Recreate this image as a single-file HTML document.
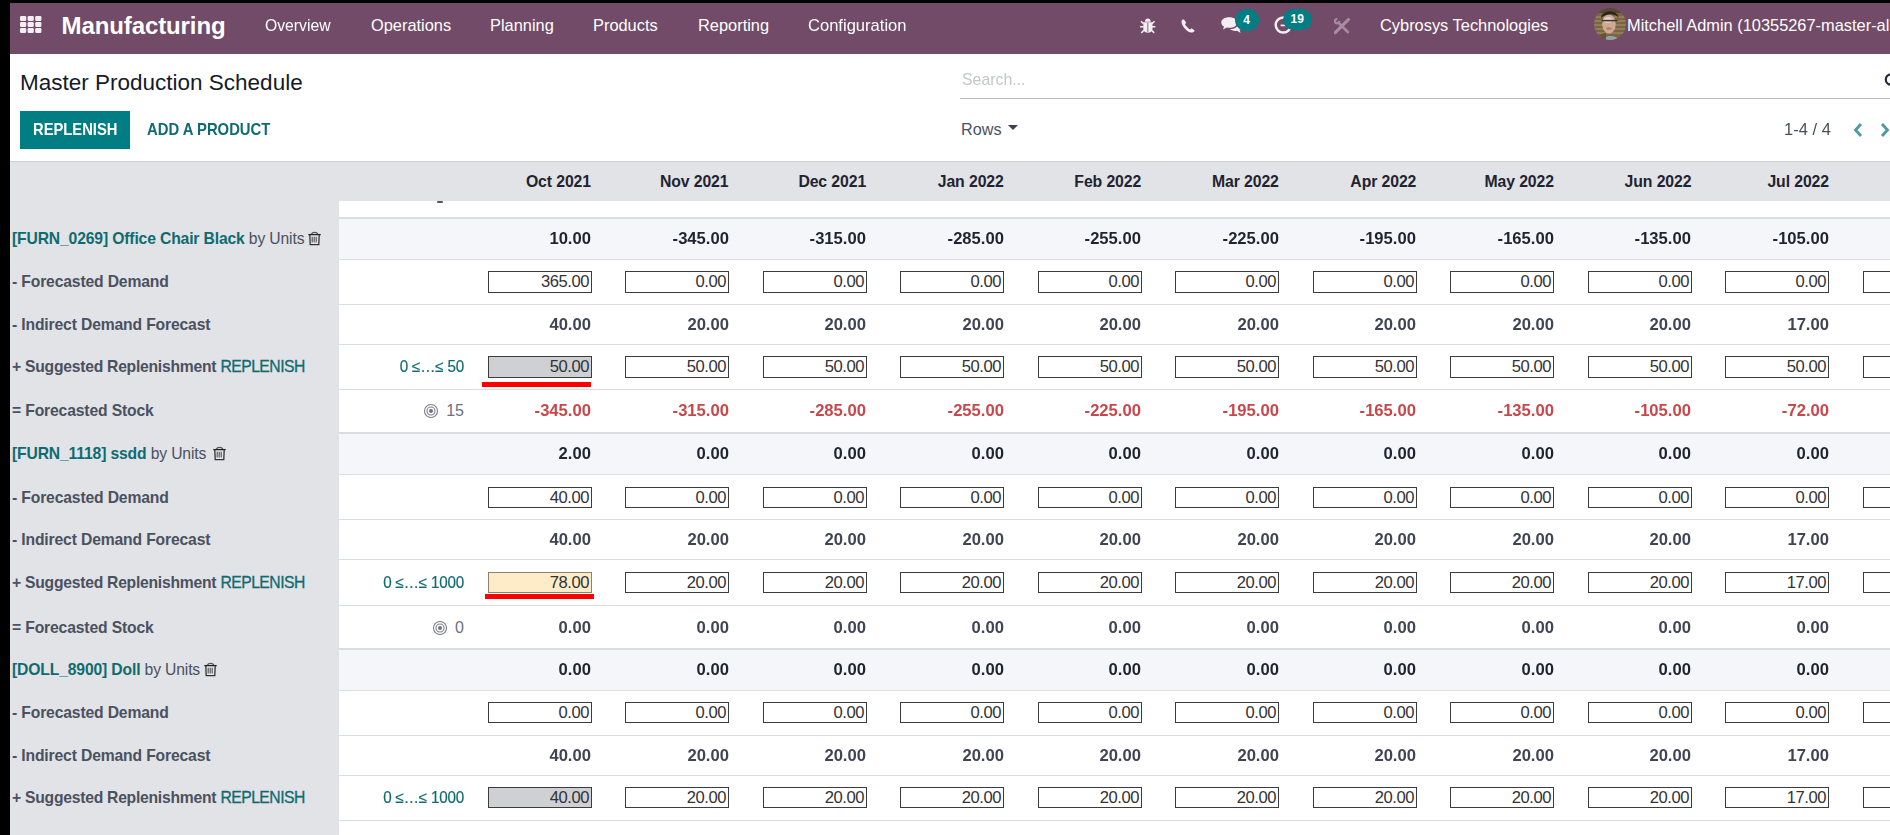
<!DOCTYPE html><html><head><meta charset="utf-8"><style>
*{margin:0;padding:0;box-sizing:border-box}
html,body{width:1890px;height:835px;overflow:hidden;background:#000;font-family:"Liberation Sans",sans-serif}
.a{position:absolute;white-space:nowrap}
#nav{position:absolute;left:10px;top:3px;width:1880px;height:52px;background:#714b67;border-bottom:1px solid #5e3f56}
.mi{position:absolute;top:11px;color:#fff;font-size:16.4px;line-height:22px;white-space:nowrap}
.r{position:absolute;text-align:right;white-space:nowrap}
.lbl{position:absolute;left:12px;font-weight:bold;color:#4a5160;font-size:15.7px;letter-spacing:-0.15px;white-space:nowrap;line-height:22px}
.val{font-weight:bold;color:#3f4553;font-size:15.7px;line-height:22px;transform:scaleX(1.06);transform-origin:100% 50%}
.inp{position:absolute;width:104px;height:22px;border:1px solid #3c3c3c;background:#fff;font-size:16.6px;color:#333;text-align:right;padding-right:2px;line-height:19px;white-space:nowrap;letter-spacing:-0.45px}
.hline{position:absolute;left:339px;width:1551px;height:1px;background:#dcdde1}
.sq{transform-origin:0 50%;}
</style></head><body><div id="nav">
<svg class="a" style="left:9.8px;top:12.8px" width="22" height="18" viewBox="0 0 22 18"><rect x="0.0" y="0.0" width="6.2" height="5" rx="1.2" fill="#f3eef1"/><rect x="7.6" y="0.0" width="6.2" height="5" rx="1.2" fill="#f3eef1"/><rect x="15.2" y="0.0" width="6.2" height="5" rx="1.2" fill="#f3eef1"/><rect x="0.0" y="6.0" width="6.2" height="5" rx="1.2" fill="#f3eef1"/><rect x="7.6" y="6.0" width="6.2" height="5" rx="1.2" fill="#f3eef1"/><rect x="15.2" y="6.0" width="6.2" height="5" rx="1.2" fill="#f3eef1"/><rect x="0.0" y="12.0" width="6.2" height="5" rx="1.2" fill="#f3eef1"/><rect x="7.6" y="12.0" width="6.2" height="5" rx="1.2" fill="#f3eef1"/><rect x="15.2" y="12.0" width="6.2" height="5" rx="1.2" fill="#f3eef1"/></svg>
<div class="a" style="left:51.5px;top:-2.7px;line-height:51px;color:#fff;font-size:24px;font-weight:bold;letter-spacing:-0.1px">Manufacturing</div>
<div class="mi" style="left:255px;top:11px;transform:scaleX(0.96);transform-origin:0 0">Overview</div>
<div class="mi" style="left:361px;top:11px;transform:scaleX(1);transform-origin:0 0">Operations</div>
<div class="mi" style="left:480px;top:11px;transform:scaleX(1);transform-origin:0 0">Planning</div>
<div class="mi" style="left:583px;top:11px;transform:scaleX(1);transform-origin:0 0">Products</div>
<div class="mi" style="left:688px;top:11px;transform:scaleX(1);transform-origin:0 0">Reporting</div>
<div class="mi" style="left:798px;top:11px;transform:scaleX(1.01);transform-origin:0 0">Configuration</div>
<svg class="a" style="left:1130px;top:15px" width="16" height="16" viewBox="0 0 16 16">
<path d="M4.9 3.7 C4.9 -0.6 10.7 -0.6 10.7 3.7 Z" fill="#f4eef2"/>
<path d="M3.3 4.3 L12.5 4.3 L12.5 10.8 C12.5 13.6 10.5 14.8 7.9 14.8 C5.3 14.8 3.3 13.6 3.3 10.8 Z" fill="#f4eef2"/>
<path d="M0.9 3.2 L3.6 5.6 M14.6 3.2 L11.9 5.6 M0.1 8.8 L3.5 8.8 M15.4 8.8 L12 8.8 M1.3 14.9 L3.9 12.3 M14.2 14.9 L11.6 12.3" stroke="#f4eef2" stroke-width="1.5"/>
<rect x="7.3" y="4.8" width="1" height="9.6" fill="#8c6f72"/>
</svg>
<svg class="a" style="left:1171px;top:15.8px" width="14" height="14" viewBox="0 0 14 14">
<path d="M1.6 0.6 C0.2 1.6 0 3.6 1.6 6.4 C3.4 9.6 6.2 12.4 9.4 13.4 C11.2 13.9 12.6 13.4 13.5 12.1 L13.6 11.6 L10.6 9.2 L9.2 10.4 C7.6 9.8 4.8 7 4 5.2 L5.2 3.8 L3 0.5 Z" fill="#f4eef2"/>
</svg>
<svg class="a" style="left:1210.5px;top:14px" width="22" height="18" viewBox="0 0 22 18">
<path d="M8.2 0.2 C3.6 0.2 0.3 2.4 0.3 5.4 C0.3 7.2 1.5 8.8 3.2 9.7 L1.8 12.6 L6 10.6 C6.8 10.7 7.5 10.8 8.2 10.8 C12.8 10.8 16.1 8.6 16.1 5.4 C16.1 2.4 12.8 0.2 8.2 0.2 Z" fill="#f4eef2"/>
<path d="M17.3 6.2 C17.3 9.8 13.6 12 8.9 12.1 C10.1 13.2 12 13.9 14.2 13.9 C14.8 13.9 15.4 13.8 16 13.7 L19.6 15.9 L18.6 13 C20.2 12.2 21.2 10.9 21.2 9.3 C21.2 8 20.3 6.8 18.9 6 Z" fill="#f4eef2"/>
</svg>
<div class="a" style="left:1224.6px;top:5.7px;width:24px;height:22px;border-radius:11px;background:#017e84;color:#fff;font-weight:bold;font-size:12px;line-height:22px;text-align:center">4</div>
<svg class="a" style="left:1263.5px;top:13px" width="20" height="20" viewBox="0 0 20 20">
<circle cx="9.3" cy="9" r="7.6" fill="none" stroke="#f4eef2" stroke-width="2.5"/>
<path d="M6.6 9.4 L12 9.4" stroke="#f4eef2" stroke-width="1.7" fill="none"/>
</svg>
<div class="a" style="left:1272.7px;top:6px;width:29px;height:20.5px;border-radius:10.5px;background:#017e84;color:#fff;font-weight:bold;font-size:12px;line-height:20px;text-align:center">19</div>
<svg class="a" style="left:1323.5px;top:14.8px" width="17" height="17" viewBox="0 0 17 17">
<path d="M5.6 5.8 L13.8 14" stroke="#a88ca2" stroke-width="2.6" stroke-linecap="round"/>
<path d="M5.07 2.94 A2.1 2.1 0 1 1 3.36 1.23" fill="none" stroke="#a88ca2" stroke-width="2.3"/>
<path d="M1.2 14.6 L14.4 1.6" stroke="#a88ca2" stroke-width="3.1" stroke-linecap="round"/>
</svg>
<div class="mi" style="left:1370px;top:11px;transform:scaleX(1.0);transform-origin:0 0">Cybrosys Technologies</div>
<svg class="a" style="left:1584px;top:4.6px" width="32" height="32" viewBox="0 0 32 32">
<defs><clipPath id="cc"><circle cx="16" cy="16" r="16"/></clipPath><filter id="bl" x="-10%" y="-10%" width="120%" height="120%"><feGaussianBlur stdDeviation="0.7"/></filter></defs>
<g clip-path="url(#cc)"><g filter="url(#bl)">
<rect width="32" height="32" fill="#7a6644"/>
<path d="M0 9 H32 M0 13 H32 M0 17 H32 M0 21 H32 M0 25 H32" stroke="#a99366" stroke-width="1.2"/>
<rect x="0" y="0" width="32" height="5" fill="#5a4630"/>
<ellipse cx="15" cy="16" rx="6.8" ry="9.5" fill="#cfa992"/><ellipse cx="14" cy="12" rx="5" ry="3" fill="#e3cfc4"/>
<path d="M7 10 C7 2 24 1 24.5 10 L23 8 C19 5.5 12 5.5 8.5 9 Z" fill="#2a221e"/>
<path d="M7.5 12.6 H23.5" stroke="#3a3234" stroke-width="1.5"/>
<ellipse cx="15" cy="20.5" rx="3" ry="1.3" fill="#b07e6e"/>
<path d="M8 34 C9 26 24 26 26 34 Z" fill="#93a2a8"/>
<path d="M2 34 C4 26 9 25 12 25 L12 34 Z" fill="#6a5236"/>
</g></g></svg>
<div class="mi" style="left:1617px;top:11px;transform:scaleX(1.0);transform-origin:0 0">Mitchell Admin (10355267-master-all)</div>
</div>
<div class="a" style="left:10px;top:54px;width:1880px;height:108px;background:#fff"></div>
<div class="a" style="left:20px;top:68px;font-size:22.5px;color:#141a29;line-height:30px">Master Production Schedule</div>
<div class="a" style="left:962px;top:68px;font-size:16.2px;color:#c4c6ca;line-height:22px;transform:scaleX(0.98);transform-origin:0 0">Search...</div>
<div class="a" style="left:960px;top:98px;width:930px;height:1px;background:#b8bbc0"></div>
<svg class="a" style="left:1878px;top:71px" width="16" height="18" viewBox="0 0 16 18"><circle cx="13" cy="8.5" r="5.2" fill="none" stroke="#222b3a" stroke-width="2.2"/></svg>
<div class="a" style="left:20px;top:111px;width:110px;height:38px;background:#017e84"></div>
<div class="a" style="left:33px;top:118px;line-height:22px;color:#fff;font-weight:bold;font-size:16.4px;transform:scaleX(0.9);transform-origin:0 0">REPLENISH</div>
<div class="a" style="left:147px;top:118px;line-height:22px;color:#0f6b70;font-weight:bold;font-size:16.4px;transform:scaleX(0.905);transform-origin:0 0">ADD A PRODUCT</div>
<div class="a" style="left:961px;top:118px;line-height:22px;color:#4a5263;font-size:16.2px">Rows</div>
<svg class="a" style="left:1008px;top:125px" width="10" height="5" viewBox="0 0 10 5"><path d="M0 0 L10 0 L5 5 Z" fill="#3a404d"/></svg>
<div class="a" style="left:1784px;top:118px;line-height:22px;color:#4a4f5a;font-size:16.2px;transform:scaleX(1.02);transform-origin:0 0">1-4 / 4</div>
<svg class="a" style="left:1852px;top:122px" width="40" height="16" viewBox="0 0 40 16"><path d="M9 2 L3.5 8 L9 14" fill="none" stroke="#4f9a9c" stroke-width="2.8"/><path d="M30 2 L35.5 8 L30 14" fill="none" stroke="#4f9a9c" stroke-width="2.8"/></svg>
<div class="a" style="left:10px;top:161px;width:1880px;height:1px;background:#cfd1d5"></div>
<div class="a" style="left:10px;top:162px;width:1880px;height:39px;background:#e2e3e7"></div>
<div class="a" style="left:10px;top:201px;width:329px;height:634px;background:#e2e3e7"></div>
<div class="a" style="left:339px;top:201px;width:1551px;height:634px;background:#fff"></div>
<div class="a" style="left:437px;top:200.5px;width:6px;height:2px;border-radius:1px;background:#555"></div>
<div class="r" style="left:471.0px;width:120px;top:171px;line-height:22px;font-weight:bold;font-size:15.8px;color:#1f2430;letter-spacing:-0.1px">Oct 2021</div>
<div class="r" style="left:608.5px;width:120px;top:171px;line-height:22px;font-weight:bold;font-size:15.8px;color:#1f2430;letter-spacing:-0.1px">Nov 2021</div>
<div class="r" style="left:746.1px;width:120px;top:171px;line-height:22px;font-weight:bold;font-size:15.8px;color:#1f2430;letter-spacing:-0.1px">Dec 2021</div>
<div class="r" style="left:883.7px;width:120px;top:171px;line-height:22px;font-weight:bold;font-size:15.8px;color:#1f2430;letter-spacing:-0.1px">Jan 2022</div>
<div class="r" style="left:1021.2px;width:120px;top:171px;line-height:22px;font-weight:bold;font-size:15.8px;color:#1f2430;letter-spacing:-0.1px">Feb 2022</div>
<div class="r" style="left:1158.8px;width:120px;top:171px;line-height:22px;font-weight:bold;font-size:15.8px;color:#1f2430;letter-spacing:-0.1px">Mar 2022</div>
<div class="r" style="left:1296.3px;width:120px;top:171px;line-height:22px;font-weight:bold;font-size:15.8px;color:#1f2430;letter-spacing:-0.1px">Apr 2022</div>
<div class="r" style="left:1433.9px;width:120px;top:171px;line-height:22px;font-weight:bold;font-size:15.8px;color:#1f2430;letter-spacing:-0.1px">May 2022</div>
<div class="r" style="left:1571.4px;width:120px;top:171px;line-height:22px;font-weight:bold;font-size:15.8px;color:#1f2430;letter-spacing:-0.1px">Jun 2022</div>
<div class="r" style="left:1709.0px;width:120px;top:171px;line-height:22px;font-weight:bold;font-size:15.8px;color:#1f2430;letter-spacing:-0.1px">Jul 2022</div>
<div class="a" style="left:339px;top:217px;width:1551px;height:2px;background:#dcdde1"></div>
<div class="a" style="left:339px;top:219px;width:1551px;height:40px;background:#f5f6f9"></div>
<div class="hline" style="top:259px"></div>
<div class="hline" style="top:304px"></div>
<div class="hline" style="top:344px"></div>
<div class="hline" style="top:389px"></div>
<div class="a" style="left:339px;top:432px;width:1551px;height:2px;background:#dcdde1"></div>
<div class="lbl" style="top:228px;color:#0f6b70">[FURN_0269] Office Chair Black <span style="color:#4a5160;font-weight:normal">by Units</span></div>
<svg width="13" height="15" viewBox="0 0 13 15" style="position:absolute;left:308px;top:231px"><path d="M3.6 3.4 C3.6 0.6 9.6 0.6 9.6 3.4" fill="none" stroke="#555" stroke-width="1.3"/><path d="M0.3 3.6 L12.7 3.6" stroke="#222" stroke-width="1.3"/><path d="M1.8 3.8 L2.2 13.6 L10.8 13.6 L11.2 3.8" fill="none" stroke="#333" stroke-width="1.3"/><path d="M4.2 5.8 L4.2 11.4 M6.2 5.8 L6.2 11.4 M8.2 5.8 L8.2 11.4" stroke="#444" stroke-width="1"/></svg>
<div class="r val" style="left:471.0px;width:120px;top:228px;color:#1f2430">10.00</div>
<div class="r val" style="left:608.5px;width:120px;top:228px;color:#1f2430">-345.00</div>
<div class="r val" style="left:746.1px;width:120px;top:228px;color:#1f2430">-315.00</div>
<div class="r val" style="left:883.7px;width:120px;top:228px;color:#1f2430">-285.00</div>
<div class="r val" style="left:1021.2px;width:120px;top:228px;color:#1f2430">-255.00</div>
<div class="r val" style="left:1158.8px;width:120px;top:228px;color:#1f2430">-225.00</div>
<div class="r val" style="left:1296.3px;width:120px;top:228px;color:#1f2430">-195.00</div>
<div class="r val" style="left:1433.9px;width:120px;top:228px;color:#1f2430">-165.00</div>
<div class="r val" style="left:1571.4px;width:120px;top:228px;color:#1f2430">-135.00</div>
<div class="r val" style="left:1709.0px;width:120px;top:228px;color:#1f2430">-105.00</div>
<div class="lbl" style="top:271.4px">- Forecasted Demand</div>
<div class="inp" style="left:488px;top:271px;height:22px;line-height:19px">365.00</div>
<div class="inp" style="left:625px;top:271px;height:22px;line-height:19px">0.00</div>
<div class="inp" style="left:763px;top:271px;height:22px;line-height:19px">0.00</div>
<div class="inp" style="left:900px;top:271px;height:22px;line-height:19px">0.00</div>
<div class="inp" style="left:1038px;top:271px;height:22px;line-height:19px">0.00</div>
<div class="inp" style="left:1175px;top:271px;height:22px;line-height:19px">0.00</div>
<div class="inp" style="left:1313px;top:271px;height:22px;line-height:19px">0.00</div>
<div class="inp" style="left:1450px;top:271px;height:22px;line-height:19px">0.00</div>
<div class="inp" style="left:1588px;top:271px;height:22px;line-height:19px">0.00</div>
<div class="inp" style="left:1725px;top:271px;height:22px;line-height:19px">0.00</div>
<div class="inp" style="left:1863px;top:271px;height:22px;line-height:19px"></div>
<div class="lbl" style="top:313.6px">- Indirect Demand Forecast</div>
<div class="r val" style="left:471.0px;width:120px;top:313.6px">40.00</div>
<div class="r val" style="left:608.5px;width:120px;top:313.6px">20.00</div>
<div class="r val" style="left:746.1px;width:120px;top:313.6px">20.00</div>
<div class="r val" style="left:883.7px;width:120px;top:313.6px">20.00</div>
<div class="r val" style="left:1021.2px;width:120px;top:313.6px">20.00</div>
<div class="r val" style="left:1158.8px;width:120px;top:313.6px">20.00</div>
<div class="r val" style="left:1296.3px;width:120px;top:313.6px">20.00</div>
<div class="r val" style="left:1433.9px;width:120px;top:313.6px">20.00</div>
<div class="r val" style="left:1571.4px;width:120px;top:313.6px">20.00</div>
<div class="r val" style="left:1709.0px;width:120px;top:313.6px">17.00</div>
<div class="lbl" style="top:355.5px;letter-spacing:-0.25px">+ Suggested Replenishment <span style="color:#0f6b70;font-weight:normal;letter-spacing:-0.5px;-webkit-text-stroke:0.3px #0f6b70">REPLENISH</span></div>
<div class="r" style="left:344px;width:120px;top:355.5px;line-height:22px;color:#0f6b70;font-size:16px;letter-spacing:-0.2px;transform:scaleX(0.95);transform-origin:100% 50%;-webkit-text-stroke:0.2px #0f6b70">0 ≤…≤ 50</div>
<div class="inp" style="left:488px;top:356px;height:22px;line-height:19px;background:#cfd0d4">50.00</div>
<div class="inp" style="left:625px;top:356px;height:22px;line-height:19px;">50.00</div>
<div class="inp" style="left:763px;top:356px;height:22px;line-height:19px;">50.00</div>
<div class="inp" style="left:900px;top:356px;height:22px;line-height:19px;">50.00</div>
<div class="inp" style="left:1038px;top:356px;height:22px;line-height:19px;">50.00</div>
<div class="inp" style="left:1175px;top:356px;height:22px;line-height:19px;">50.00</div>
<div class="inp" style="left:1313px;top:356px;height:22px;line-height:19px;">50.00</div>
<div class="inp" style="left:1450px;top:356px;height:22px;line-height:19px;">50.00</div>
<div class="inp" style="left:1588px;top:356px;height:22px;line-height:19px;">50.00</div>
<div class="inp" style="left:1725px;top:356px;height:22px;line-height:19px;">50.00</div>
<div class="inp" style="left:1863px;top:356px;height:22px;line-height:19px;"></div>
<div class="lbl" style="top:400.2px">= Forecasted Stock</div>
<div class="r" style="left:344px;width:120px;top:400.2px;line-height:22px;color:#6c7280;font-size:16px">15</div>
<svg width="16" height="16" viewBox="0 0 16 16" style="position:absolute;left:423px;top:403px"><circle cx="8" cy="8" r="6.5" fill="none" stroke="#7a7f88" stroke-width="1.1"/><circle cx="8" cy="8" r="4" fill="none" stroke="#7a7f88" stroke-width="1.1"/><circle cx="8" cy="8" r="2" fill="#6b7280"/></svg>
<div class="r val" style="left:471.0px;width:120px;top:400.2px;color:#c8474a">-345.00</div>
<div class="r val" style="left:608.5px;width:120px;top:400.2px;color:#c8474a">-315.00</div>
<div class="r val" style="left:746.1px;width:120px;top:400.2px;color:#c8474a">-285.00</div>
<div class="r val" style="left:883.7px;width:120px;top:400.2px;color:#c8474a">-255.00</div>
<div class="r val" style="left:1021.2px;width:120px;top:400.2px;color:#c8474a">-225.00</div>
<div class="r val" style="left:1158.8px;width:120px;top:400.2px;color:#c8474a">-195.00</div>
<div class="r val" style="left:1296.3px;width:120px;top:400.2px;color:#c8474a">-165.00</div>
<div class="r val" style="left:1433.9px;width:120px;top:400.2px;color:#c8474a">-135.00</div>
<div class="r val" style="left:1571.4px;width:120px;top:400.2px;color:#c8474a">-105.00</div>
<div class="r val" style="left:1709.0px;width:120px;top:400.2px;color:#c8474a">-72.00</div>
<div class="a" style="left:339px;top:434px;width:1551px;height:40px;background:#f5f6f9"></div>
<div class="hline" style="top:474px"></div>
<div class="hline" style="top:519px"></div>
<div class="hline" style="top:559px"></div>
<div class="hline" style="top:605px"></div>
<div class="a" style="left:339px;top:648px;width:1551px;height:2px;background:#dcdde1"></div>
<div class="lbl" style="top:443px;color:#0f6b70">[FURN_1118] ssdd <span style="color:#4a5160;font-weight:normal">by Units</span></div>
<svg width="13" height="15" viewBox="0 0 13 15" style="position:absolute;left:213px;top:446px"><path d="M3.6 3.4 C3.6 0.6 9.6 0.6 9.6 3.4" fill="none" stroke="#555" stroke-width="1.3"/><path d="M0.3 3.6 L12.7 3.6" stroke="#222" stroke-width="1.3"/><path d="M1.8 3.8 L2.2 13.6 L10.8 13.6 L11.2 3.8" fill="none" stroke="#333" stroke-width="1.3"/><path d="M4.2 5.8 L4.2 11.4 M6.2 5.8 L6.2 11.4 M8.2 5.8 L8.2 11.4" stroke="#444" stroke-width="1"/></svg>
<div class="r val" style="left:471.0px;width:120px;top:443px;color:#1f2430">2.00</div>
<div class="r val" style="left:608.5px;width:120px;top:443px;color:#1f2430">0.00</div>
<div class="r val" style="left:746.1px;width:120px;top:443px;color:#1f2430">0.00</div>
<div class="r val" style="left:883.7px;width:120px;top:443px;color:#1f2430">0.00</div>
<div class="r val" style="left:1021.2px;width:120px;top:443px;color:#1f2430">0.00</div>
<div class="r val" style="left:1158.8px;width:120px;top:443px;color:#1f2430">0.00</div>
<div class="r val" style="left:1296.3px;width:120px;top:443px;color:#1f2430">0.00</div>
<div class="r val" style="left:1433.9px;width:120px;top:443px;color:#1f2430">0.00</div>
<div class="r val" style="left:1571.4px;width:120px;top:443px;color:#1f2430">0.00</div>
<div class="r val" style="left:1709.0px;width:120px;top:443px;color:#1f2430">0.00</div>
<div class="lbl" style="top:486.9px">- Forecasted Demand</div>
<div class="inp" style="left:488px;top:487px;height:21px;line-height:19px">40.00</div>
<div class="inp" style="left:625px;top:487px;height:21px;line-height:19px">0.00</div>
<div class="inp" style="left:763px;top:487px;height:21px;line-height:19px">0.00</div>
<div class="inp" style="left:900px;top:487px;height:21px;line-height:19px">0.00</div>
<div class="inp" style="left:1038px;top:487px;height:21px;line-height:19px">0.00</div>
<div class="inp" style="left:1175px;top:487px;height:21px;line-height:19px">0.00</div>
<div class="inp" style="left:1313px;top:487px;height:21px;line-height:19px">0.00</div>
<div class="inp" style="left:1450px;top:487px;height:21px;line-height:19px">0.00</div>
<div class="inp" style="left:1588px;top:487px;height:21px;line-height:19px">0.00</div>
<div class="inp" style="left:1725px;top:487px;height:21px;line-height:19px">0.00</div>
<div class="inp" style="left:1863px;top:487px;height:21px;line-height:19px"></div>
<div class="lbl" style="top:529.1px">- Indirect Demand Forecast</div>
<div class="r val" style="left:471.0px;width:120px;top:529.1px">40.00</div>
<div class="r val" style="left:608.5px;width:120px;top:529.1px">20.00</div>
<div class="r val" style="left:746.1px;width:120px;top:529.1px">20.00</div>
<div class="r val" style="left:883.7px;width:120px;top:529.1px">20.00</div>
<div class="r val" style="left:1021.2px;width:120px;top:529.1px">20.00</div>
<div class="r val" style="left:1158.8px;width:120px;top:529.1px">20.00</div>
<div class="r val" style="left:1296.3px;width:120px;top:529.1px">20.00</div>
<div class="r val" style="left:1433.9px;width:120px;top:529.1px">20.00</div>
<div class="r val" style="left:1571.4px;width:120px;top:529.1px">20.00</div>
<div class="r val" style="left:1709.0px;width:120px;top:529.1px">17.00</div>
<div class="lbl" style="top:571.5px;letter-spacing:-0.25px">+ Suggested Replenishment <span style="color:#0f6b70;font-weight:normal;letter-spacing:-0.5px;-webkit-text-stroke:0.3px #0f6b70">REPLENISH</span></div>
<div class="r" style="left:344px;width:120px;top:571.5px;line-height:22px;color:#0f6b70;font-size:16px;letter-spacing:-0.2px;transform:scaleX(0.95);transform-origin:100% 50%;-webkit-text-stroke:0.2px #0f6b70">0 ≤…≤ 1000</div>
<div class="inp" style="left:488px;top:572px;height:21px;line-height:19px;background:#feecc9;border-color:#8d8270">78.00</div>
<div class="inp" style="left:625px;top:572px;height:21px;line-height:19px;">20.00</div>
<div class="inp" style="left:763px;top:572px;height:21px;line-height:19px;">20.00</div>
<div class="inp" style="left:900px;top:572px;height:21px;line-height:19px;">20.00</div>
<div class="inp" style="left:1038px;top:572px;height:21px;line-height:19px;">20.00</div>
<div class="inp" style="left:1175px;top:572px;height:21px;line-height:19px;">20.00</div>
<div class="inp" style="left:1313px;top:572px;height:21px;line-height:19px;">20.00</div>
<div class="inp" style="left:1450px;top:572px;height:21px;line-height:19px;">20.00</div>
<div class="inp" style="left:1588px;top:572px;height:21px;line-height:19px;">20.00</div>
<div class="inp" style="left:1725px;top:572px;height:21px;line-height:19px;">17.00</div>
<div class="inp" style="left:1863px;top:572px;height:21px;line-height:19px;"></div>
<div class="lbl" style="top:616.7px">= Forecasted Stock</div>
<div class="r" style="left:344px;width:120px;top:616.7px;line-height:22px;color:#6c7280;font-size:16px">0</div>
<svg width="16" height="16" viewBox="0 0 16 16" style="position:absolute;left:432px;top:619.5px"><circle cx="8" cy="8" r="6.5" fill="none" stroke="#7a7f88" stroke-width="1.1"/><circle cx="8" cy="8" r="4" fill="none" stroke="#7a7f88" stroke-width="1.1"/><circle cx="8" cy="8" r="2" fill="#6b7280"/></svg>
<div class="r val" style="left:471.0px;width:120px;top:616.7px;color:#3f4553">0.00</div>
<div class="r val" style="left:608.5px;width:120px;top:616.7px;color:#3f4553">0.00</div>
<div class="r val" style="left:746.1px;width:120px;top:616.7px;color:#3f4553">0.00</div>
<div class="r val" style="left:883.7px;width:120px;top:616.7px;color:#3f4553">0.00</div>
<div class="r val" style="left:1021.2px;width:120px;top:616.7px;color:#3f4553">0.00</div>
<div class="r val" style="left:1158.8px;width:120px;top:616.7px;color:#3f4553">0.00</div>
<div class="r val" style="left:1296.3px;width:120px;top:616.7px;color:#3f4553">0.00</div>
<div class="r val" style="left:1433.9px;width:120px;top:616.7px;color:#3f4553">0.00</div>
<div class="r val" style="left:1571.4px;width:120px;top:616.7px;color:#3f4553">0.00</div>
<div class="r val" style="left:1709.0px;width:120px;top:616.7px;color:#3f4553">0.00</div>
<div class="a" style="left:339px;top:650px;width:1551px;height:40px;background:#f5f6f9"></div>
<div class="hline" style="top:690px"></div>
<div class="hline" style="top:735px"></div>
<div class="hline" style="top:775px"></div>
<div class="hline" style="top:820px"></div>
<div class="a" style="left:339px;top:863px;width:1551px;height:2px;background:#dcdde1"></div>
<div class="lbl" style="top:659px;color:#0f6b70">[DOLL_8900] Doll <span style="color:#4a5160;font-weight:normal">by Units</span></div>
<svg width="13" height="15" viewBox="0 0 13 15" style="position:absolute;left:204px;top:662px"><path d="M3.6 3.4 C3.6 0.6 9.6 0.6 9.6 3.4" fill="none" stroke="#555" stroke-width="1.3"/><path d="M0.3 3.6 L12.7 3.6" stroke="#222" stroke-width="1.3"/><path d="M1.8 3.8 L2.2 13.6 L10.8 13.6 L11.2 3.8" fill="none" stroke="#333" stroke-width="1.3"/><path d="M4.2 5.8 L4.2 11.4 M6.2 5.8 L6.2 11.4 M8.2 5.8 L8.2 11.4" stroke="#444" stroke-width="1"/></svg>
<div class="r val" style="left:471.0px;width:120px;top:659px;color:#1f2430">0.00</div>
<div class="r val" style="left:608.5px;width:120px;top:659px;color:#1f2430">0.00</div>
<div class="r val" style="left:746.1px;width:120px;top:659px;color:#1f2430">0.00</div>
<div class="r val" style="left:883.7px;width:120px;top:659px;color:#1f2430">0.00</div>
<div class="r val" style="left:1021.2px;width:120px;top:659px;color:#1f2430">0.00</div>
<div class="r val" style="left:1158.8px;width:120px;top:659px;color:#1f2430">0.00</div>
<div class="r val" style="left:1296.3px;width:120px;top:659px;color:#1f2430">0.00</div>
<div class="r val" style="left:1433.9px;width:120px;top:659px;color:#1f2430">0.00</div>
<div class="r val" style="left:1571.4px;width:120px;top:659px;color:#1f2430">0.00</div>
<div class="r val" style="left:1709.0px;width:120px;top:659px;color:#1f2430">0.00</div>
<div class="lbl" style="top:702.4px">- Forecasted Demand</div>
<div class="inp" style="left:488px;top:702px;height:21px;line-height:19px">0.00</div>
<div class="inp" style="left:625px;top:702px;height:21px;line-height:19px">0.00</div>
<div class="inp" style="left:763px;top:702px;height:21px;line-height:19px">0.00</div>
<div class="inp" style="left:900px;top:702px;height:21px;line-height:19px">0.00</div>
<div class="inp" style="left:1038px;top:702px;height:21px;line-height:19px">0.00</div>
<div class="inp" style="left:1175px;top:702px;height:21px;line-height:19px">0.00</div>
<div class="inp" style="left:1313px;top:702px;height:21px;line-height:19px">0.00</div>
<div class="inp" style="left:1450px;top:702px;height:21px;line-height:19px">0.00</div>
<div class="inp" style="left:1588px;top:702px;height:21px;line-height:19px">0.00</div>
<div class="inp" style="left:1725px;top:702px;height:21px;line-height:19px">0.00</div>
<div class="inp" style="left:1863px;top:702px;height:21px;line-height:19px"></div>
<div class="lbl" style="top:744.6px">- Indirect Demand Forecast</div>
<div class="r val" style="left:471.0px;width:120px;top:744.6px">40.00</div>
<div class="r val" style="left:608.5px;width:120px;top:744.6px">20.00</div>
<div class="r val" style="left:746.1px;width:120px;top:744.6px">20.00</div>
<div class="r val" style="left:883.7px;width:120px;top:744.6px">20.00</div>
<div class="r val" style="left:1021.2px;width:120px;top:744.6px">20.00</div>
<div class="r val" style="left:1158.8px;width:120px;top:744.6px">20.00</div>
<div class="r val" style="left:1296.3px;width:120px;top:744.6px">20.00</div>
<div class="r val" style="left:1433.9px;width:120px;top:744.6px">20.00</div>
<div class="r val" style="left:1571.4px;width:120px;top:744.6px">20.00</div>
<div class="r val" style="left:1709.0px;width:120px;top:744.6px">17.00</div>
<div class="lbl" style="top:786.5px;letter-spacing:-0.25px">+ Suggested Replenishment <span style="color:#0f6b70;font-weight:normal;letter-spacing:-0.5px;-webkit-text-stroke:0.3px #0f6b70">REPLENISH</span></div>
<div class="r" style="left:344px;width:120px;top:786.5px;line-height:22px;color:#0f6b70;font-size:16px;letter-spacing:-0.2px;transform:scaleX(0.95);transform-origin:100% 50%;-webkit-text-stroke:0.2px #0f6b70">0 ≤…≤ 1000</div>
<div class="inp" style="left:488px;top:787px;height:21px;line-height:19px;background:#cfd0d4">40.00</div>
<div class="inp" style="left:625px;top:787px;height:21px;line-height:19px;">20.00</div>
<div class="inp" style="left:763px;top:787px;height:21px;line-height:19px;">20.00</div>
<div class="inp" style="left:900px;top:787px;height:21px;line-height:19px;">20.00</div>
<div class="inp" style="left:1038px;top:787px;height:21px;line-height:19px;">20.00</div>
<div class="inp" style="left:1175px;top:787px;height:21px;line-height:19px;">20.00</div>
<div class="inp" style="left:1313px;top:787px;height:21px;line-height:19px;">20.00</div>
<div class="inp" style="left:1450px;top:787px;height:21px;line-height:19px;">20.00</div>
<div class="inp" style="left:1588px;top:787px;height:21px;line-height:19px;">20.00</div>
<div class="inp" style="left:1725px;top:787px;height:21px;line-height:19px;">17.00</div>
<div class="inp" style="left:1863px;top:787px;height:21px;line-height:19px;"></div>
<div class="lbl" style="top:831.2px">= Forecasted Stock</div>
<div class="r" style="left:344px;width:120px;top:831.2px;line-height:22px;color:#6c7280;font-size:16px">0</div>
<svg width="16" height="16" viewBox="0 0 16 16" style="position:absolute;left:432px;top:834px"><circle cx="8" cy="8" r="6.5" fill="none" stroke="#7a7f88" stroke-width="1.1"/><circle cx="8" cy="8" r="4" fill="none" stroke="#7a7f88" stroke-width="1.1"/><circle cx="8" cy="8" r="2" fill="#6b7280"/></svg>
<div class="r val" style="left:471.0px;width:120px;top:831.2px;color:#3f4553">0.00</div>
<div class="r val" style="left:608.5px;width:120px;top:831.2px;color:#3f4553">0.00</div>
<div class="r val" style="left:746.1px;width:120px;top:831.2px;color:#3f4553">0.00</div>
<div class="r val" style="left:883.7px;width:120px;top:831.2px;color:#3f4553">0.00</div>
<div class="r val" style="left:1021.2px;width:120px;top:831.2px;color:#3f4553">0.00</div>
<div class="r val" style="left:1158.8px;width:120px;top:831.2px;color:#3f4553">0.00</div>
<div class="r val" style="left:1296.3px;width:120px;top:831.2px;color:#3f4553">0.00</div>
<div class="r val" style="left:1433.9px;width:120px;top:831.2px;color:#3f4553">0.00</div>
<div class="r val" style="left:1571.4px;width:120px;top:831.2px;color:#3f4553">0.00</div>
<div class="r val" style="left:1709.0px;width:120px;top:831.2px;color:#3f4553">0.00</div>
<div class="a" style="left:482px;top:382px;width:109px;height:5px;background:#ff0000"></div>
<div class="a" style="left:485px;top:594px;width:109px;height:5px;background:#ff0000"></div></body></html>
